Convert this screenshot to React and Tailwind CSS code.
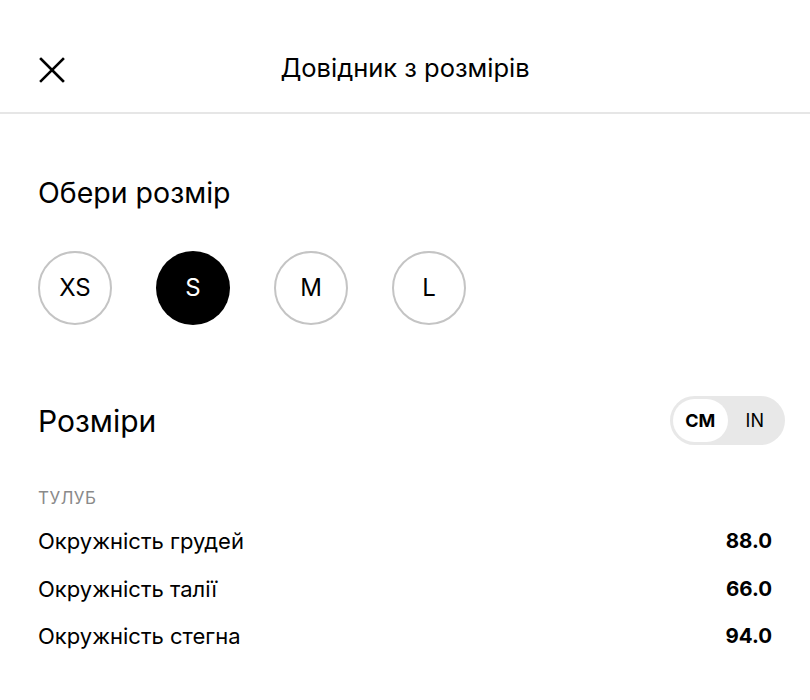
import React, { useState } from 'react';

const sizes = ['XS', 'S', 'M', 'L'];

const rows = [
  { label: 'Окружність грудей', cm: '88.0', inch: '34.6' },
  { label: 'Окружність талії', cm: '66.0', inch: '26.0' },
  { label: 'Окружність стегна', cm: '94.0', inch: '37.0' },
];

const App = () => {
  const [selected, setSelected] = useState('S');
  const [unit, setUnit] = useState('cm');

  return (
    <div className="w-[810px] h-[700px] bg-white text-black font-['Inter','Noto_Sans',sans-serif] overflow-hidden">
      {/* Header */}
      <div className="relative h-[114px] flex items-center justify-center border-b-2 border-[#e6e6e6]">
        <button className="absolute left-[36px] top-[54px] w-[32px] h-[32px] flex items-center justify-center">
          <svg width="28" height="28" viewBox="0 0 28 28" fill="none" stroke="black" strokeWidth="2.6" strokeLinecap="square">
            <path d="M3 3 L25 25 M25 3 L3 25" />
          </svg>
        </button>
        <h1 className="text-[25.5px] font-normal mt-[24px]">Довідник з розмірів</h1>
      </div>

      <div className="px-[38px]">
        <h2 className="mt-[60px] text-[28.5px] font-normal leading-[38px]">Обери розмір</h2>

        <div className="mt-[39px] flex gap-[44px]">
          {sizes.map((s) => (
            <button
              key={s}
              onClick={() => setSelected(s)}
              className={`w-[74px] h-[74px] rounded-full flex items-center justify-center text-[24px] ${
                selected === s ? 'bg-black text-white' : 'border-2 border-[#c4c4c4] text-black'
              }`}
            >
              {s}
            </button>
          ))}
        </div>

        <div className="mt-[71px] flex items-center justify-between">
          <h2 className="text-[30px] font-normal leading-[40px]">Розміри</h2>
          <div className="w-[115px] h-[49px] -mr-[13px] rounded-full bg-[#e8e8e8] p-[3px] flex">
            <button
              onClick={() => setUnit('cm')}
              className={`flex-1 rounded-full text-[18px] ${unit === 'cm' ? 'bg-white font-bold' : ''}`}
            >
              CM
            </button>
            <button
              onClick={() => setUnit('in')}
              className={`flex-1 rounded-full text-[18px] ${unit === 'in' ? 'bg-white font-bold' : ''}`}
            >
              IN
            </button>
          </div>
        </div>

        <div className="mt-[43px] text-[17px] text-[#8a8a8a] tracking-[0.5px] leading-[20px]">ТУЛУБ</div>

        <div className="mt-[10px] flex flex-col">
          {rows.map((r) => (
            <div key={r.label} className="h-[47.5px] flex items-center justify-between">
              <span className="text-[22px]">{r.label}</span>
              <span className="text-[20.5px] font-bold">{unit === 'cm' ? r.cm : r.inch}</span>
            </div>
          ))}
        </div>
      </div>
    </div>
  );
};

export default App;
